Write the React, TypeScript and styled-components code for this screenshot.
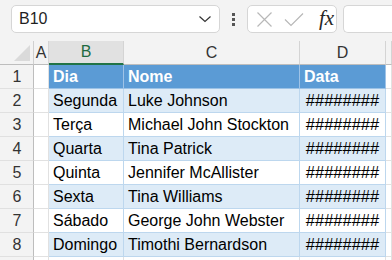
import React from 'react';
import styled, { createGlobalStyle } from 'styled-components';

const GlobalStyle = createGlobalStyle`
  html, body {
    margin: 0;
    padding: 0;
    background: #ffffff;
  }
  * {
    box-sizing: border-box;
  }
`;

const rows = [
  { day: 'Segunda', name: 'Luke Johnson' },
  { day: 'Terça', name: 'Michael John Stockton' },
  { day: 'Quarta', name: 'Tina Patrick' },
  { day: 'Quinta', name: 'Jennifer McAllister' },
  { day: 'Sexta', name: 'Tina Williams' },
  { day: 'Sábado', name: 'George John Webster' },
  { day: 'Domingo', name: 'Timothi Bernardson' }
];

const columns = ['A', 'B', 'C', 'D', ''];

const App = () => {
  return (
    <>
      <GlobalStyle />
      <Window>
        <Toolbar>
          <NameBox>
            <NameText>B10</NameText>
            <svg width='14' height='8' viewBox='0 0 14 8'>
              <path d='M1.5 1.5 L7 6.5 L12.5 1.5' fill='none' stroke='#333' strokeWidth='1.2' />
            </svg>
          </NameBox>
          <Dots>
            <span />
            <span />
            <span />
          </Dots>
          <FxBox>
            <svg width='17' height='17' viewBox='0 0 17 17'>
              <path d='M1.5 1.5 L15.5 15.5 M15.5 1.5 L1.5 15.5' stroke='#b8b8b8' strokeWidth='1.2' fill='none' />
            </svg>
            <svg width='20' height='15' viewBox='0 0 20 15'>
              <path d='M1 7.5 L7 13.5 L19 1.5' stroke='#b8b8b8' strokeWidth='1.2' fill='none' />
            </svg>
            <FxLabel>fx</FxLabel>
          </FxBox>
          <FormulaInput />
        </Toolbar>

        <Sheet>
          <Corner>
            <svg width='16' height='16' viewBox='0 0 16 16'>
              <path d='M16 0 L16 16 L0 16 Z' fill='#dadada' />
            </svg>
          </Corner>
          {columns.map((c) => (
            <ColHead key={c || 'E'} selected={c === 'B'}>
              {c}
            </ColHead>
          ))}

          <RowHead>1</RowHead>
          <Cell />
          <TableHead>Dia</TableHead>
          <TableHead>Nome</TableHead>
          <TableHead>Data</TableHead>
          <Cell />

          {rows.map((r, i) => (
            <React.Fragment key={r.day}>
              <RowHead>{i + 2}</RowHead>
              <Cell />
              <TableCell banded={i % 2 === 0}>{r.day}</TableCell>
              <TableCell banded={i % 2 === 0}>{r.name}</TableCell>
              <TableCell banded={i % 2 === 0} hashes>
                ########
              </TableCell>
              <Cell />
            </React.Fragment>
          ))}

          <RowHead />
          <Cell />
          <Cell />
          <Cell />
          <Cell />
          <Cell />
        </Sheet>
      </Window>
    </>
  );
};

export default App;

const Window = styled.div`
  width: 392px;
  height: 260px;
  overflow: hidden;
  background: #f3f3f3;
  font-family: 'Liberation Sans', Arial, sans-serif;
`;

const Toolbar = styled.div`
  display: flex;
  align-items: center;
  height: 41px;
  padding: 5px 0 8px 11px;
`;

const NameBox = styled.div`
  display: flex;
  align-items: center;
  justify-content: space-between;
  width: 209px;
  height: 28px;
  padding: 0 7px 0 7px;
  background: #ffffff;
  border: 1px solid #d6d6d6;
  border-radius: 5px;
`;

const NameText = styled.span`
  font-size: 16px;
  color: #1f1f1f;
`;

const Dots = styled.div`
  display: flex;
  flex-direction: column;
  gap: 2px;
  width: 27px;
  align-items: center;

  span {
    width: 3px;
    height: 3px;
    background: #555;
  }
`;

const FxBox = styled.div`
  display: flex;
  align-items: center;
  gap: 11px;
  width: 90px;
  height: 28px;
  padding: 0 0 0 8px;
  background: #ffffff;
  border: 1px solid #d6d6d6;
  border-radius: 5px;
`;

const FxLabel = styled.span`
  font-family: 'Liberation Serif', 'Times New Roman', serif;
  font-style: italic;
  font-size: 21px;
  line-height: 1;
  color: #262626;
  margin-left: 4px;
  padding-bottom: 2px;
`;

const FormulaInput = styled.div`
  flex: 1;
  height: 28px;
  margin-left: 6px;
  background: #ffffff;
  border: 1px solid #d6d6d6;
  border-right: none;
  border-radius: 5px 0 0 5px;
`;

const Sheet = styled.div`
  display: grid;
  grid-template-columns: 34px 15px 75px 176px 86px 1fr;
  grid-template-rows: 24px repeat(9, 24px);
  background: #ffffff;
  font-size: 16px;
`;

const Corner = styled.div`
  display: flex;
  align-items: flex-end;
  justify-content: flex-end;
  padding: 0 3px 3px 0;
  background: #f3f3f3;
  border-right: 1px solid #d0d0d0;
  border-bottom: 1px solid #bdbdbd;
`;

const ColHead = styled.div<{ selected?: boolean }>`
  display: flex;
  align-items: center;
  justify-content: center;
  font-size: 16px;
  color: ${(p) => (p.selected ? '#1e6b41' : '#333')};
  background: ${(p) => (p.selected ? '#e1e1e1' : '#f3f3f3')};
  border-right: 1px solid #d4d4d4;
  border-bottom: ${(p) => (p.selected ? '2px solid #217346' : '1px solid #bdbdbd')};
`;

const RowHead = styled.div`
  display: flex;
  align-items: center;
  justify-content: center;
  padding-left: 1px;
  font-size: 16px;
  color: #333;
  background: #f3f3f3;
  border-right: 1px solid #bdbdbd;
  border-bottom: 1px solid #e0e0e0;
`;

const Cell = styled.div`
  border-right: 1px solid #e1e1e1;
  border-bottom: 1px solid #e1e1e1;
`;

const TableHead = styled.div`
  display: flex;
  align-items: center;
  padding-left: 4px;
  font-weight: bold;
  color: #ffffff;
  background: #5b9bd5;
  border-right: 1px solid #9fc3e7;
  border-bottom: 1px solid #9bc2e6;
`;

const TableCell = styled.div<{ banded?: boolean; hashes?: boolean }>`
  display: flex;
  align-items: center;
  justify-content: ${(p) => (p.hashes ? 'center' : 'flex-start')};
  padding-left: ${(p) => (p.hashes ? '0' : '4px')};
  white-space: nowrap;
  overflow: hidden;
  color: #000;
  font-size: ${(p) => (p.hashes ? '16.5px' : '16px')};
  background: ${(p) => (p.banded ? '#ddebf7' : '#ffffff')};
  border-right: 1px solid #bdd7ee;
  border-bottom: 1px solid #bdd7ee;
`;
